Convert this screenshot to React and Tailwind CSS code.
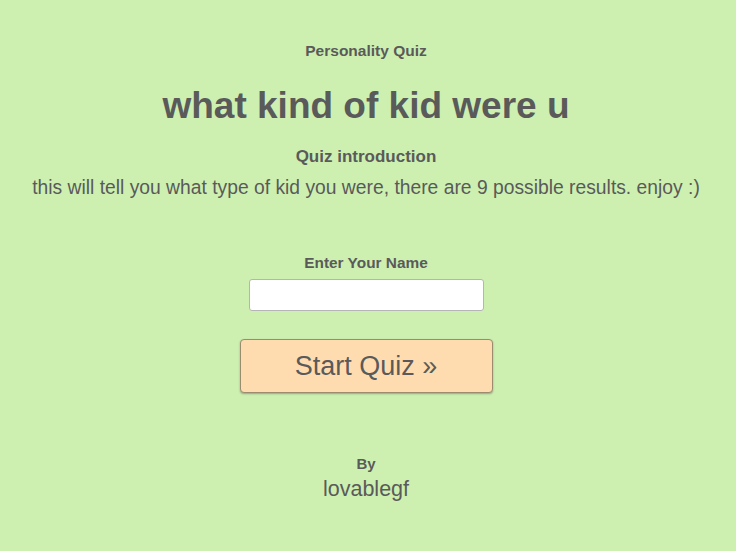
import React, { useState } from "react";

// Quiz landing page
const App = () => {
  const [name, setName] = useState(""); // Player name

  return (
    <div
      className="min-h-screen w-full bg-[#cdf0b1] text-[#5a5a5a] flex flex-col items-center text-center pt-[42px] pr-[4px]"
      style={{ fontFamily: '"Liberation Sans", Arial, sans-serif' }}
    >
      <div className="text-[15.5px] leading-[18px] font-bold">Personality Quiz</div>
      <h1 className="mt-[24px] text-[37px] leading-[44px] font-bold">what kind of kid were u</h1>
      <div className="mt-[19px] text-[17px] leading-[20px] font-bold">Quiz introduction</div>
      <p className="mt-[10px] text-[19.3px] leading-[22px]">
        this will tell you what type of kid you were, there are 9 possible results. enjoy :)
      </p>

      <label className="mt-[55px] text-[15.4px] leading-[18px] font-bold">Enter Your Name</label>
      <input
        type="text"
        value={name}
        onChange={(e) => setName(e.target.value)}
        className="mt-[7px] w-[235px] h-[32px] bg-white border border-[#b5b5b5] rounded-[3px] outline-none px-2 text-base"
      />

      <button className="mt-[28px] w-[253px] h-[54px] bg-[#ffdcb0] border border-[#9b8c70] rounded-[4px] shadow-[0_1px_2px_rgba(0,0,0,0.3)] text-[27px] leading-[32px] text-[#5a5a5a]">
        Start Quiz »
      </button>

      <div className="mt-[62px] text-[15px] leading-[18px] font-bold">By</div>
      <div className="mt-[4px] text-[21.5px] leading-[24px]">lovablegf</div>
    </div>
  );
};

export default App;
